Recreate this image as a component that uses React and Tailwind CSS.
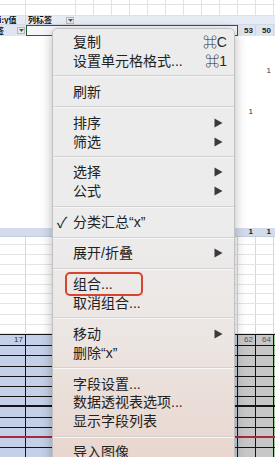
import React from 'react'

const W = [
  'w-[26px]', 'w-[50px]',
  'w-[18px]', 'w-[18px]', 'w-[18px]', 'w-[18px]', 'w-[18px]', 'w-[18px]', 'w-[18px]', 'w-[18px]', 'w-[18px]',
  'w-[18px]', 'w-[18px]', 'w-[1px]',
]

function Row({ h, line = 'border-[#e2e2e2]', bg = 'bg-white', b = 'border-b border-[#e2e2e2]', cells = {}, bgs = {} }) {
  return (
    <div className={`flex shrink-0 ${h} ${b}`}>
      {W.map((w, i) => (
        <div
          key={i}
          className={`${w} shrink-0 border-r ${line} ${bgs[i] ?? bg} flex items-center justify-end overflow-hidden pr-[2px]`}
        >
          {cells[i]}
        </div>
      ))}
    </div>
  )
}

const num = (v, cls = 'text-[#222] font-bold') => (
  <span className={`text-[8px] leading-none font-['Liberation_Sans',sans-serif] ${cls}`}>{v}</span>
)

function Dropdown() {
  return (
    <span className="w-[8px] h-[7px] bg-[#e8e8e8] border border-[#b8b8b8] flex items-center justify-center">
      <svg width="5" height="3" viewBox="0 0 5 3"><path d="M0 0h5L2.5 3z" fill="#555" /></svg>
    </span>
  )
}

function Sheet() {
  const blueLeft = { 0: 'bg-[#c4d0e7]', 1: 'bg-[#c4d0e7]', 11: 'bg-[#c7c7c7]', 12: 'bg-[#c7c7c7]', 13: 'bg-[#9fd39a]' }
  const dark = 'border-[#151515]'
  const bottomRows = [
    'h-[11px]', 'h-[10px]', 'h-[11px]', 'h-[10px]', 'h-[10px]', 'h-[10px]', 'h-[10px]', 'h-[11px]',
    'h-[10px]', 'h-[10px]', 'h-[10px]', 'h-[10px]',
  ]
  const midRows = ['h-[8px]', 'h-[10px]', 'h-[10px]', 'h-[10px]', 'h-[10px]', 'h-[9px]', 'h-[10px]', 'h-[11px]', 'h-[10px]', 'h-[9px]']

  return (
    <div className="flex flex-col">
      <Row h="h-[5px]" />
      <Row h="h-[11px]" />
      {/* pivot header */}
      <div className="flex shrink-0 h-[9px] bg-[#e7ebf3] border-b border-[#d3d9e4]">
        <div className="w-[26px] shrink-0 flex items-center overflow-hidden border-r border-[#d3d9e4]">
          <span className="text-[8px] leading-none font-bold text-[#111] font-['Noto_Sans_CJK_SC',sans-serif] -ml-[1px]">i:y值</span>
        </div>
        <div className="w-[50px] shrink-0 flex items-center justify-between pl-[2px] pr-[2px]">
          <span className="text-[8px] leading-none font-bold text-[#111] font-['Noto_Sans_CJK_SC',sans-serif]">列标签</span>
          <Dropdown />
        </div>
        <div className="flex-1" />
      </div>
      <div className="flex shrink-0 h-[11px] bg-[#dfe5f0]">
        <div className="w-[26px] shrink-0 flex items-center justify-between pr-[1px] overflow-hidden">
          <span className="text-[8px] leading-none font-bold text-[#111] font-['Noto_Sans_CJK_SC',sans-serif] -ml-[4px]">签</span>
          <Dropdown />
        </div>
        <div className="w-[212px] shrink-0 border-[1.5px] border-[#22643a] bg-[#f4f6f9]" />
        <div className="w-[18px] shrink-0 flex items-center justify-end pr-[2px] border-r border-[#cfd6e2]">{num('53')}</div>
        <div className="w-[18px] shrink-0 flex items-center justify-end pr-[2px] border-r border-[#cfd6e2]">{num('50')}</div>
        <div className="flex-1" />
      </div>
      {/* values area */}
      <div className="h-[30px] shrink-0 bg-white" />
      <Row h="h-[9px]" line="border-white" b="" cells={{ 12: num('1', 'text-[#333]') }} />
      <div className="h-[32px] shrink-0 bg-white" />
      <Row h="h-[9px]" line="border-white" b="" cells={{ 11: num('1', 'text-[#333]') }} />
      <div className="h-[112px] shrink-0 bg-white" />
      <Row
        h="h-[9px]"
        bg="bg-[#d3dcec]"
        line="border-[#d3dcec]"
        b="border-b border-[#c3cde0]"
        cells={{ 11: num('1'), 12: num('1') }}
      />
      {midRows.map((h, i) => (
        <Row key={i} h={h} line="border-[#d8d8d8]" b="border-b border-[#e4e4e4]" />
      ))}
      <div className="h-[1px] bg-[#151515] shrink-0" />
      {bottomRows.map((h, i) => (
        <Row
          key={i}
          h={h}
          line={dark}
          bg="bg-[#c4d0e7]"
          bgs={blueLeft}
          b={i === 9 ? 'border-b-2 border-[#a62a3b]' : i === 6 ? 'border-b-2 border-[#151515]' : 'border-b border-[#151515]'}
          cells={i === 0 ? { 0: num('17', 'text-[#333]'), 11: num('62', 'text-[#555]'), 12: num('64', 'text-[#555]') } : {}}
        />
      ))}
    </div>
  )
}

function Arrow() {
  return (
    <svg width="9" height="10" viewBox="0 0 9 10">
      <path d="M0.5 0.5L8.5 5L0.5 9.5z" fill="#3a3a3a" />
    </svg>
  )
}

const items = [
  { t: '复制', k: '⌘C' },
  { t: '设置单元格格式...', k: '⌘1' },
  'sep',
  { t: '刷新' },
  'sep',
  { t: '排序', sub: true },
  { t: '筛选', sub: true },
  'sep',
  { t: '选择', sub: true },
  { t: '公式', sub: true },
  'sep',
  { t: '分类汇总“x”', check: true },
  'sep',
  { t: '展开/折叠', sub: true },
  'sep',
  { t: '组合...', mark: true },
  { t: '取消组合...' },
  'sep',
  { t: '移动', sub: true },
  { t: '删除“x”' },
  'sep',
  { t: '字段设置...' },
  { t: '数据透视表选项...' },
  { t: '显示字段列表' },
  'sep',
  { t: '导入图像' },
]

function Menu() {
  return (
    <div className="absolute left-[52px] top-[28px] w-[183px] h-[440px] rounded-t-[5px] border border-[#c2c2c2] bg-linear-to-b from-[#ececec] from-45% via-[#ece6e3] via-70% to-[#e8d5cd] shadow-[0_3px_12px_rgba(0,0,0,0.28)] pt-[3.5px] font-['Liberation_Sans','Noto_Sans_CJK_SC','DejaVu_Sans',sans-serif] text-[14px] text-[#222]">
      {items.map((it, i) =>
        it === 'sep' ? (
          <div key={i} className="h-[12px] flex items-center">
            <div className="w-full h-[2px] border-t border-[#d2d2d2] border-b border-b-[#f6f6f6]" />
          </div>
        ) : (
          <div key={i} className="relative h-[18.9px] flex items-center pl-[4px] pr-[11px]">
            <span className="w-[16px] text-[15px] leading-none text-[#222]">{it.check ? '✓' : ''}</span>
            <span className="flex-1 leading-none whitespace-nowrap">{it.t}</span>
            {it.k && <span className="leading-none -mr-[4px] text-[#2a2a2a]">{it.k}</span>}
            {it.sub && <Arrow />}
            {it.mark && (
              <div className="absolute left-[12px] top-[-2.5px] w-[78px] h-[24px] border-2 border-[#d8452e] rounded-[5px]" />
            )}
          </div>
        )
      )}
    </div>
  )
}

export default function App() {
  return (
    <div className="relative w-[275px] h-[457px] overflow-hidden bg-white">
      <Sheet />
      <Menu />
    </div>
  )
}
